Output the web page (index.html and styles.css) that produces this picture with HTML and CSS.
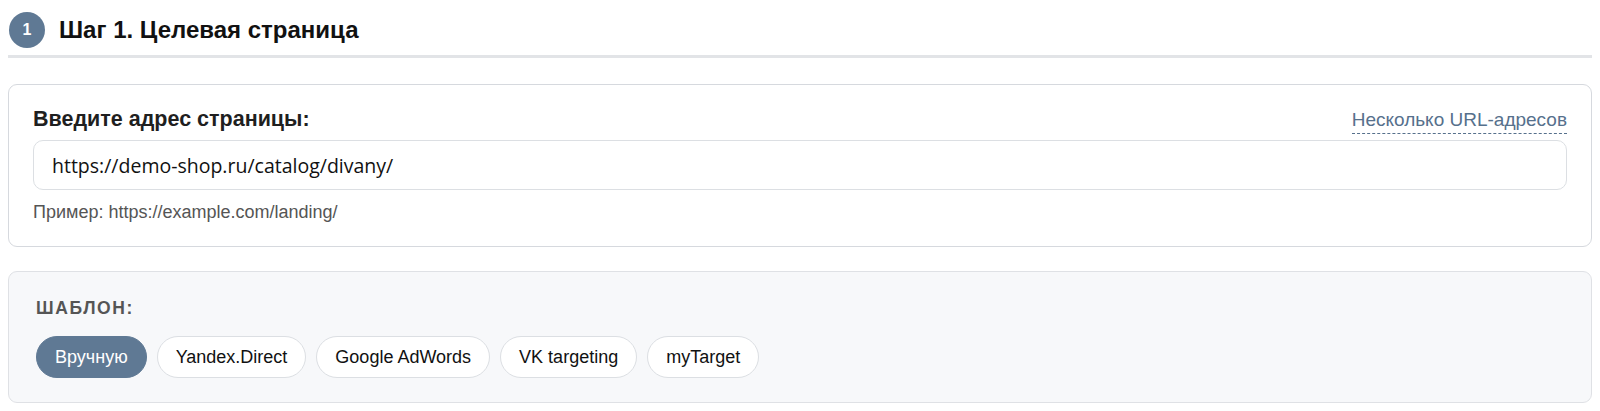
FILE: index.html
```html
<!DOCTYPE html>
<html lang="ru">
<head>
<meta charset="utf-8">
<link rel="stylesheet" href="styles.css">
</head>
<body>
  <div class="step-header">
    <span class="step-num">1</span>
    <h2 class="step-title">Шаг 1. Целевая страница</h2>
  </div>

  <section class="card">
    <div class="field-head">
      <label class="field-label" for="url">Введите адрес страницы:</label>
      <a class="multi-link" href="#">Несколько URL-адресов</a>
    </div>
    <input id="url" class="url-input" type="text" value="https://demo-shop.ru/catalog/divany/">
    <div class="hint">Пример: https://example.com/landing/</div>
  </section>

  <section class="card card-muted">
    <div class="section-label">ШАБЛОН:</div>
    <div class="chips">
      <button class="chip chip-active">Вручную</button>
      <button class="chip">Yandex.Direct</button>
      <button class="chip">Google AdWords</button>
      <button class="chip">VK targeting</button>
      <button class="chip">myTarget</button>
    </div>
  </section>
</body>
</html>
```

FILE: styles.css
```css
* { box-sizing: border-box; }

body {
  margin: 8px;
  font-family: "Liberation Sans", Arial, sans-serif;
  color: #1a1a1a;
  background: #fff;
}

.step-header {
  display: flex;
  align-items: center;
  gap: 14px;
  padding: 4px 0 7px 1px;
  border-bottom: 3px solid #e2e4e7;
}

.step-num {
  flex: none;
  width: 36px;
  height: 36px;
  border-radius: 50%;
  background: #5f7994;
  color: #fff;
  font-size: 16px;
  font-weight: bold;
  display: flex;
  align-items: center;
  justify-content: center;
}

.step-title {
  margin: 0;
  font-size: 24px;
  font-weight: bold;
  color: #111;
}

.card {
  margin-top: 26px;
  border: 1px solid #d6d9de;
  border-radius: 9px;
  padding: 22px 24px 23px;
  background: #fff;
}

.field-head {
  display: flex;
  justify-content: space-between;
  align-items: baseline;
}

.field-label {
  font-size: 21.5px;
  font-weight: bold;
  color: #1f1f1f;
}

.multi-link {
  font-size: 19px;
  color: #56708c;
  text-decoration: none;
  border-bottom: 1px dashed #56708c;
  padding-bottom: 2px;
}

.url-input {
  display: block;
  width: 100%;
  height: 50px;
  margin-top: 6px;
  padding: 0 18px;
  border: 1px solid #dcdfe3;
  border-radius: 10px;
  font-family: "Open Sans", sans-serif;
  font-size: 19.5px;
  color: #111;
  background: #fff;
  outline: none;
}

.hint {
  margin-top: 12px;
  font-size: 18px;
  color: #555;
}

.card-muted {
  margin-top: 24px;
  background: #f7f8fa;
  border-color: #dfe1e5;
  padding: 26px 26px 24px 27px;
}

.section-label {
  font-size: 17.5px;
  font-weight: bold;
  letter-spacing: 1.6px;
  color: #555;
}

.chips {
  display: flex;
  gap: 10px;
  margin-top: 17px;
}

.chip {
  font-family: "Liberation Sans", Arial, sans-serif;
  font-size: 18px;
  line-height: 22px;
  padding: 9px 18px;
  border: 1px solid #dcdfe3;
  border-radius: 21px;
  background: #fff;
  color: #111;
}

.chip-active {
  background: #5f7994;
  border-color: #5f7994;
  color: #fff;
}
```
